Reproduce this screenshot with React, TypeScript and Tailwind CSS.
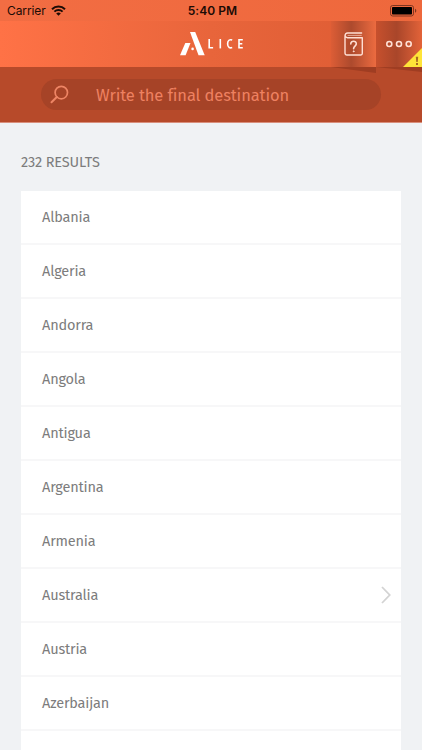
import React from "react";

type Country = { name: string; arrow?: boolean };

const countries: Country[] = [
  { name: "Albania" },
  { name: "Algeria" },
  { name: "Andorra" },
  { name: "Angola" },
  { name: "Antigua" },
  { name: "Argentina" },
  { name: "Armenia" },
  { name: "Australia", arrow: true },
  { name: "Austria" },
  { name: "Azerbaijan" },
  { name: "" },
];

function StatusBar() {
  return (
    <div className="grid h-[21px] shrink-0 grid-cols-3 items-center bg-linear-to-r from-[#f26d43] to-[#ee683c] pl-[7px] pr-[5px] font-['Inter','Liberation_Sans',sans-serif] text-[#1c0b05]">
      <div className="flex items-center gap-[5px]">
        <span className="text-[12px] leading-none tracking-[-0.1px]">Carrier</span>
        <svg width="15" height="11" viewBox="0 0 15 11" fill="none" stroke="#1c0b05">
          <path d="M1 4.2a9.2 9.2 0 0 1 13 0" strokeWidth="2" />
          <path d="M3.4 6.7a5.8 5.8 0 0 1 8.2 0" strokeWidth="1.9" />
          <path d="M7.5 10.8 5.2 8.5a3.3 3.3 0 0 1 4.6 0Z" fill="#1c0b05" stroke="none" />
        </svg>
      </div>
      <span className="pl-px text-center text-[12px] font-semibold leading-none tracking-[0.05px]">5:40 PM</span>
      <svg className="justify-self-end" width="27" height="12" viewBox="0 0 27 12">
        <rect x="0.5" y="0.5" width="23" height="10.5" rx="2.2" fill="none" stroke="#7f3520" />
        <rect x="2" y="2" width="20" height="7.5" rx="0.8" fill="#000" />
        <path d="M25 3.8c1.8.5 1.8 3.4 0 3.9Z" fill="#7f3520" />
      </svg>
    </div>
  );
}

function Logo() {
  return (
    <svg className="absolute left-[180px] top-[11px]" width="66" height="24" viewBox="0 0 66 24">
      <path d="M10 0h5.2l9.5 23.3h-6.2Z" fill="#fff" />
      <path d="M5.3 11h5.2L5.6 23.3H0Z" fill="#fff" />
      <circle cx="12.6" cy="16.9" r="1.3" fill="#fff" />
      <g fill="none" stroke="#fff" strokeWidth="1.6">
        <path d="M29.2 7v8.7h3.9" />
        <path d="M40.3 7v9.4" />
        <path d="M52.2 8.1c-2-.7-4.6-.4-4.6 3.7s2.6 4.5 4.6 3.7" />
        <path d="M62.8 7.7h-3.8v8h3.8M59 11.7h3.3" />
      </g>
    </svg>
  );
}

function BookIcon() {
  return (
    <svg width="19" height="24" viewBox="0 0 19 24" fill="none" stroke="#ffdfd4" strokeWidth="1.4" strokeLinecap="round" strokeLinejoin="round">
      <path d="M17.6 1H3.6C.3 1 .3 5.7 3.6 5.7h14.7v15.9c0 .9-.5 1.4-1.4 1.4H3c-1.3 0-2-.8-2-2V3.5" />
      <path d="M4 3.4h13.3" strokeWidth="0.9" strokeOpacity="0.7" />
      <path d="M6.8 12c-.2-3.8 5.7-3.6 5.5-.1-.1 2.2-2.7 2.3-2.7 4.8" strokeWidth="1.6" />
      <circle cx="9.6" cy="19.3" r=".5" fill="#ffdfd4" strokeWidth=".8" />
    </svg>
  );
}

function Header() {
  return (
    <header className="relative z-10 flex h-[46px] shrink-0 justify-end bg-linear-to-r from-[#ff7246] via-[#e8653b] to-[#dc5a32]">
      <Logo />
      <button className="relative flex w-[45px] items-center justify-center bg-linear-to-r from-[#dc5d36] via-[#ad4a2d] via-45% to-[#ec6b40]">
        <BookIcon />
        <svg className="absolute left-0 top-[46px]" width="45" height="6" viewBox="0 0 45 6"><path d="M0 0h45v6Z" fill="#9f3d22" /></svg>
      </button>
      <button className="relative flex w-[46px] items-center justify-center bg-linear-to-r from-[#c7502d] via-[#a9462a] via-45% to-[#e36339]">
        <svg width="26" height="8" viewBox="0 0 26 8" fill="none" stroke="#ffe1d6" strokeWidth="1.6">
          <circle cx="3.3" cy="4" r="2.5" /><circle cx="13" cy="4" r="2.5" /><circle cx="22.7" cy="4" r="2.5" />
        </svg>
        <svg className="absolute bottom-0 right-0" width="19" height="19" viewBox="0 0 19 19">
          <path d="M0 19 19 0v19Z" fill="#ffe438" />
          <path d="M12.8 8.7h2.4l-.5 5.3h-1.4ZM13 15h2v2h-2Z" fill="#a86824" />
        </svg>
        <svg className="absolute left-0 top-[46px]" width="46" height="6" viewBox="0 0 46 6"><path d="M0 0h46v5Z" fill="#9f3d22" /></svg>
      </button>
    </header>
  );
}

export default function App() {
  return (
    <main className="flex h-[750px] w-[422px] flex-col overflow-hidden bg-[#f0f2f4] font-['Fira_Sans','Noto_Sans',sans-serif] text-[#7c7c7c]">
      <StatusBar />
      <Header />
      <section className="flex h-[56px] shrink-0 items-center border-b border-[#d98f7c] bg-[#b74a2a] px-[41px]">
        <div className="flex h-[31px] w-[341px] items-center rounded-full bg-[#a64327] pl-[9px]">
          <svg width="19" height="19" viewBox="0 0 19 19" fill="none" stroke="#ee8565" strokeLinecap="round">
            <circle cx="11.3" cy="7.6" r="6.2" strokeWidth="1.7" />
            <path d="m6.8 12-5.3 5.3" strokeWidth="2" />
          </svg>
          <span className="ml-[27px] mt-[3px] whitespace-nowrap text-[16.5px] leading-none tracking-[-0.12px] text-[#ee8161]">Write the final destination</span>
        </div>
      </section>
      <h1 className="mt-[29px] mb-px ml-[21px] h-[20px] shrink-0 text-[14.5px] font-normal lining-nums leading-[20px] tracking-[-0.14px]">232 RESULTS</h1>
      <ul className="mx-[21px] mt-[18px] shrink-0">
        {countries.map((country, i) => (
          <li key={i} className="flex h-[54px] items-center justify-between border-b-2 border-[#f7f7f8] bg-white pl-[21px] pr-[10px] text-[14.5px] leading-none tracking-[-0.18px]">
            <span className="mt-px">{country.name}</span>
            {country.arrow && (
              <svg width="10" height="18" viewBox="0 0 10 18" fill="none" stroke="#d3d3d3" strokeWidth="1.8"><path d="m1 1 7.7 8L1 17" /></svg>
            )}
          </li>
        ))}
      </ul>
    </main>
  );
}
